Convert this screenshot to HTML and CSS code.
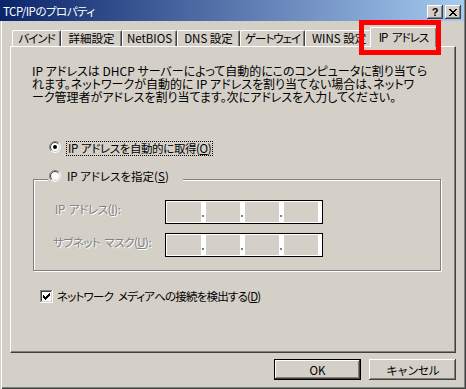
FILE: index.html
```html
<!DOCTYPE html>
<html lang="ja">
<head>
<meta charset="utf-8">
<title>TCP/IPのプロパティ</title>
<link rel="stylesheet" href="styles.css">
</head>
<body>
<div class="window">
  <div class="titlebar">
    <span class="title">TCP/IPのプロパティ</span>
    <div class="caption-buttons">
      <span class="cbtn help">?</span>
      <span class="cbtn close"><svg width="8" height="7" viewBox="0 0 8 7" shape-rendering="crispEdges"><path fill="#000" d="M0 0h2v1H0zM6 0h2v1H6zM1 1h2v1H1zM5 1h2v1H5zM2 2h4v1H2zM3 3h2v1H3zM2 4h4v1H2zM1 5h2v1H1zM5 5h2v1H5zM0 6h2v1H0zM6 6h2v1H6z"/></svg></span>
    </div>
  </div>
  <div class="tabs">
    <div class="tab t1 kana">バインド</div>
    <div class="tab t2">詳細設定</div>
    <div class="tab t3">NetBIOS</div>
    <div class="tab t4">DNS 設定</div>
    <div class="tab t5 kana">ゲートウェイ</div>
    <div class="tab t6">WINS 設定</div>
    <div class="tab selected kana">IP アドレス<span class="highlight"></span></div>
  </div>
  <div class="panel">
    <p class="desc">IP アドレスは DHCP サーバーによって自動的にこのコンピュータに割り当てら<br>れます。ネットワークが自動的に IP アドレスを割り当てない場合は、ネットワ<br>ーク管理者がアドレスを割り当てます。次にアドレスを入力してください。</p>
    <div class="option auto">
      <svg class="radio" width="12" height="12" viewBox="0 0 12 12"><circle cx="6" cy="6" r="5" fill="#fff"/><path d="M2.111 9.889A5.5 5.5 0 0 1 9.889 2.111" fill="none" stroke="#808080"/><path d="M9.889 2.111A5.5 5.5 0 0 1 2.111 9.889" fill="none" stroke="#fff"/><path d="M2.818 9.182A4.5 4.5 0 0 1 9.182 2.818" fill="none" stroke="#404040"/><path d="M9.182 2.818A4.5 4.5 0 0 1 2.818 9.182" fill="none" stroke="#d4d0c8"/><circle cx="6" cy="6" r="2" fill="#000"/></svg>
      <span class="focus">IP アドレスを自動的に取得(<u>O</u>)</span>
    </div>
    <fieldset class="group">
      <legend class="option manual">
        <svg class="radio" width="12" height="12" viewBox="0 0 12 12"><circle cx="6" cy="6" r="5" fill="#fff"/><path d="M2.111 9.889A5.5 5.5 0 0 1 9.889 2.111" fill="none" stroke="#808080"/><path d="M9.889 2.111A5.5 5.5 0 0 1 2.111 9.889" fill="none" stroke="#fff"/><path d="M2.818 9.182A4.5 4.5 0 0 1 9.182 2.818" fill="none" stroke="#404040"/><path d="M9.182 2.818A4.5 4.5 0 0 1 2.818 9.182" fill="none" stroke="#d4d0c8"/></svg>
        <span class="olabel">IP アドレスを指定(<u>S</u>)</span>
      </legend>
      <div class="field">
        <span class="flabel ip">IP アドレス(<u>I</u>):</span>
        <div class="ipbox"><span class="oct"></span><span class="sep"></span><span class="oct"></span><span class="sep"></span><span class="oct"></span><span class="sep"></span><span class="oct"></span></div>
      </div>
      <div class="field">
        <span class="flabel mask">サブネット マスク(<u>U</u>):</span>
        <div class="ipbox"><span class="oct"></span><span class="sep"></span><span class="oct"></span><span class="sep"></span><span class="oct"></span><span class="sep"></span><span class="oct"></span></div>
      </div>
    </fieldset>
    <div class="check">
      <svg width="13" height="13" viewBox="0 0 13 13" shape-rendering="crispEdges"><rect x="0" y="0" width="13" height="13" fill="#fff"/><rect x="0" y="0" width="12" height="12" fill="#808080"/><rect x="1" y="1" width="11" height="11" fill="#d4d0c8"/><rect x="1" y="1" width="10" height="10" fill="#404040"/><rect x="2" y="2" width="9" height="9" fill="#fff"/><path fill="#000" d="M3 5h1v3H3zM4 6h1v3H4zM5 7h1v3H5zM6 6h1v3H6zM7 5h1v3H7zM8 4h1v3H8zM9 3h1v3H9z"/></svg>
      <span class="clabel">ネットワーク メディアへの接続を検出する(<u>D</u>)</span>
    </div>
  </div>
  <div class="buttons">
    <button class="btn default">OK</button>
    <button class="btn cancel">キャンセル</button>
  </div>
</div>
</body>
</html>
```
FILE: styles.css
```css
* { box-sizing: border-box; }
html, body { margin: 0; padding: 0; }
body {
  background: #d4d0c8;
  font-family: "Noto Sans CJK JP", "Noto Sans", sans-serif;
  font-size: 12px;
  line-height: 12px;
  color: #000;
  font-feature-settings: "palt" 1;
}
.window {
  position: relative;
  width: 466px;
  height: 389px;
  background: #d4d0c8;
  box-shadow: inset 1px 0 0 #d4d0c8, inset 2px 0 0 #fff, inset -1px -1px 0 #404040, inset -2px -2px 0 #808080;
  overflow: hidden;
}
.titlebar {
  height: 21px;
  margin-right: 2px;
  background: linear-gradient(to right, #0a246a, #a6caf0);
  display: flex;
  justify-content: space-between;
  align-items: flex-start;
  padding: 0 3px 0 3px;
}
.title { color: #fff; margin-top: 5px; white-space: nowrap; font-size: 11.5px; letter-spacing: -0.5px; }
.caption-buttons { display: flex; gap: 2px; margin-top: 5px; }
.cbtn {
  width: 16px;
  height: 14px;
  background: #d4d0c8;
  box-shadow: inset -1px -1px 0 #404040, inset 1px 1px 0 #fff, inset -2px -2px 0 #808080;
  display: flex;
  align-items: center;
  justify-content: center;
}
.help { font-family: "Liberation Sans", sans-serif; font-weight: bold; font-size: 11px; line-height: 11px; padding-top: 1px; }
.close svg { display: block; margin-top: 1px; }

.tabs {
  position: relative;
  z-index: 1;
  display: flex;
  align-items: flex-end;
  height: 19px;
  margin-top: 6px;
  padding-left: 12px;
}
.tab {
  height: 16px;
  border-top: 1px solid #fff;
  border-left: 1px solid #fff;
  border-right: 1px solid #404040;
  box-shadow: inset -1px 0 0 #808080;
  border-top-left-radius: 2px;
  border-top-right-radius: 2px;
  text-align: center;
  font-size: 11.5px;
  line-height: 13px;
  padding-top: 1px;
  white-space: nowrap;
  overflow: hidden;
}
.tab.kana { letter-spacing: -1px; word-spacing: 3px; }
.t1 { width: 49px; }
.t2 { width: 61px; }
.t3 { width: 55px; }
.t4 { width: 63px; }
.t5 { width: 65px; }
.t6 { width: 67px; text-align: left; padding-left: 6px; }
.tab.selected {
  width: 67px;
  height: 20px;
  margin-left: -2px;
  margin-bottom: -1px;
  padding-top: 3px;
  background: #d4d0c8;
  position: relative;
  overflow: visible;
}
.highlight {
  position: absolute;
  left: -12px;
  top: -8px;
  width: 82px;
  height: 35px;
  border: 5px solid #f00;
  pointer-events: none;
}

.panel {
  width: 446px;
  height: 307px;
  margin-left: 10px;
  border-top: 1px solid #fff;
  border-left: 1px solid #fff;
  border-right: 1px solid #404040;
  border-bottom: 1px solid #404040;
  box-shadow: inset -1px -1px 0 #808080;
  padding-top: 17px;
}
.desc { margin: 0 0 0 21px; line-height: 13px; white-space: nowrap; }

.option { display: flex; align-items: flex-start; }
.option.auto { margin: 38px 0 0 38px; }
.radio { display: block; flex: none; }
.focus { margin-left: 5px; border: 1px dotted #000; padding: 0 1px; height: 15px; font-size: 11.5px; line-height: 13px; letter-spacing: -0.4px; word-spacing: 1px; white-space: nowrap; }
.olabel { margin-left: 6px; white-space: nowrap; font-size: 11.5px; line-height: 12px; }

.group {
  margin: 14px 0 0 22px;
  width: 408px;
  min-inline-size: 0;
  padding: 12px 0 13px 14px;
  border: 1px solid #808080;
  box-shadow: 1px 1px 0 #fff, inset 1px 1px 0 #fff;
}
.group legend {
  width: 135px;
  padding: 0 0 6px 1px;
  background: #d4d0c8;
}
.field { display: flex; margin-left: 7px; }
.field + .field { margin-top: 9px; }
.flabel { width: 110px; padding-top: 3px; color: #808080; text-shadow: 1px 1px 0 #fff; white-space: nowrap; font-size: 11.5px; }
.flabel.ip { letter-spacing: -0.4px; word-spacing: 2px; }
.flabel.mask { letter-spacing: -0.5px; word-spacing: 2px; margin-left: -2px; margin-right: 2px; }
.ipbox {
  display: flex;
  width: 158px;
  height: 24px;
  border: 1px solid #000;
  background: #fff;
  padding: 1px 4px 1px 1px;
}
.oct { width: 34px; height: 20px; background: #d4d0c8; }
.sep { width: 5px; height: 20px; padding: 13px 0 0 1px; }
.sep::before { content: ""; display: block; width: 2px; height: 2px; background: #808080; }

.check { display: flex; align-items: flex-start; margin: 19px 0 0 29px; }
.check svg { display: block; margin-right: 4px; flex: none; }
.clabel { line-height: 13px; white-space: nowrap; font-size: 11.5px; letter-spacing: -0.8px; word-spacing: 3px; }

.buttons {
  display: flex;
  justify-content: flex-end;
  gap: 8px;
  margin-top: 6px;
  padding-right: 10px;
}
.btn {
  width: 87px;
  height: 21px;
  font-family: inherit;
  font-size: 11.5px;
  line-height: 12px;
  color: #000;
  background: #d4d0c8;
  border: 0;
  padding: 0;
  box-shadow: inset -1px -1px 0 #404040, inset 1px 1px 0 #fff, inset -2px -2px 0 #808080;
}
.btn.cancel { letter-spacing: -1px; }
.btn.default {
  box-shadow: inset 0 0 0 1px #000, inset -2px -2px 0 #404040, inset 2px 2px 0 #fff, inset -3px -3px 0 #808080;
}
```
